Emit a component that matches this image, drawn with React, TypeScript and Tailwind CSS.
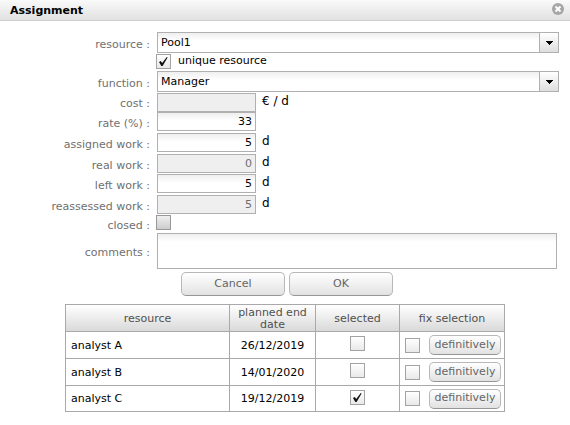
import { useId, type ReactNode } from "react";

const fieldBox =
  "box-border rounded-none border border-[#b0b0b0] text-[11px] outline-none";
const openField =
  "bg-white bg-linear-to-b from-[#efefef] to-white to-[8px] text-black";
const lockedField = "bg-[#efefef] text-[#6e6e6e]";
const raisedButton =
  "rounded-[5px] border border-[#b8b8b8] border-b-[#969696] bg-linear-to-b from-white to-[#e2e2e2] text-center text-[11px] text-[#656565]";

function Row({
  label,
  htmlFor,
  height,
  children,
}: {
  label?: string;
  htmlFor?: string;
  height: string;
  children: ReactNode;
}) {
  return (
    <div className={`flex ${height}`}>
      <div className="flex w-[157px] shrink-0 items-center justify-end pt-[3px] pr-[7px] leading-4 text-[#707070]">
        {label && <label htmlFor={htmlFor}>{label}&nbsp;:</label>}
      </div>
      {children}
    </div>
  );
}

function CheckBox({
  id,
  label,
  checked = false,
  dark = false,
}: {
  id?: string;
  label?: string;
  checked?: boolean;
  dark?: boolean;
}) {
  return (
    <span className="relative inline-block size-[15px] shrink-0 align-top">
      <input
        id={id}
        type="checkbox"
        aria-label={label}
        defaultChecked={checked}
        className={`peer block size-[15px] appearance-none border bg-linear-to-b ${
          dark
            ? "border-[#999999] from-[#f0f0f0] to-[#cccccc]"
            : "border-[#a3a3a3] from-white to-[#e9e9e9]"
        }`}
      />
      <svg
        viewBox="0 0 15 15"
        className="pointer-events-none absolute inset-0 hidden size-[15px] peer-checked:block"
      >
        <path d="M3 8 L4.8 7 L6.2 9 L10.8 3 L11.6 3.5 L6.6 12 L5.3 12 Z" fill="#111" />
      </svg>
    </span>
  );
}

function DropDown({ label, value }: { label: string; value: string }) {
  const id = useId();
  return (
    <Row label={label} htmlFor={id} height="h-[22px]">
      <div className="relative mr-[11px] h-[21px] flex-1">
        <select
          id={id}
          className={`block h-[21px] w-full appearance-none pt-0.5 pr-6 pl-[3px] ${fieldBox} ${openField}`}
        >
          <option>{value}</option>
        </select>
        <span className="pointer-events-none absolute inset-y-0 right-0 flex w-5 items-center justify-center border border-[#b0b0b0] bg-linear-to-b from-white to-[#dedede]">
          <svg width="7" height="4" viewBox="0 0 7 4" shapeRendering="crispEdges">
            <path d="M0 0H7V1H6V2H5V3H4V4H3V3H2V2H1V1H0Z" fill="#000" />
          </svg>
        </span>
      </div>
    </Row>
  );
}

function NumberField({
  label,
  value,
  unit,
  locked = false,
  height,
}: {
  label: string;
  value: string;
  unit?: string;
  locked?: boolean;
  height: string;
}) {
  const id = useId();
  return (
    <Row label={label} htmlFor={id} height={height}>
      <input
        id={id}
        type="text"
        defaultValue={value}
        readOnly={locked}
        className={`h-[19px] w-[99px] px-[3px] text-right ${fieldBox} ${
          locked ? lockedField : openField
        }`}
      />
      {unit && <span className="pl-1.5 text-xs">{unit}</span>}
    </Row>
  );
}

const analysts = [
  { name: "analyst A", end: "26/12/2019", selected: false },
  { name: "analyst B", end: "14/01/2020", selected: false },
  { name: "analyst C", end: "19/12/2019", selected: true },
];

const headCell = "border border-[#a9a9a9] px-0 pt-0.5 pb-0 font-normal leading-3";
const cell = "border border-[#a9a9a9] p-0";

export default function App() {
  return (
    <div className="min-h-screen bg-white font-['DejaVu_Sans',Verdana,sans-serif] text-[11px] text-black">
      <header className="flex h-[21px] items-center justify-between border-b border-[#cfcfcf] bg-linear-to-b from-[#fafafa] to-[#e1e1e1] pr-1.5 pl-2.5">
        <h1 className="pt-[3px] font-bold">Assignment</h1>
        <button type="button" aria-label="Close" className="mb-0.5">
          <svg width="12" height="12" viewBox="0 0 12 12" className="block">
            <circle cx="6" cy="6" r="6" fill="#a6a6a6" />
            <path d="M3.5 3.5 L8.5 8.5 M8.5 3.5 L3.5 8.5" stroke="#fff" strokeWidth="2" />
          </svg>
        </button>
      </header>

      <form className="pt-[11px]" onSubmit={(e) => e.preventDefault()}>
        <DropDown label="resource" value="Pool1" />
        <Row height="h-[17px]">
          <div className="-ml-px flex h-[15px] items-center gap-[7px]">
            <CheckBox id="unique" checked />
            <label htmlFor="unique">unique resource</label>
          </div>
        </Row>
        <DropDown label="function" value="Manager" />
        <NumberField label="cost" value="" unit="€ / d" locked height="h-[19px]" />
        <NumberField label="rate (%)" value="33" height="h-[21px]" />
        <NumberField label="assigned work" value="5" unit="d" height="h-[21px]" />
        <NumberField label="real work" value="0" unit="d" locked height="h-5" />
        <NumberField label="left work" value="5" unit="d" height="h-[21px]" />
        <NumberField label="reassessed work" value="5" unit="d" locked height="h-5" />
        <Row label="closed" htmlFor="closed" height="h-[18px]">
          <div className="-ml-px">
            <CheckBox id="closed" dark />
          </div>
        </Row>
        <Row label="comments" htmlFor="comments" height="h-9">
          <textarea
            id="comments"
            className={`mr-[13px] flex-1 resize-none px-[3px] ${fieldBox} ${openField}`}
          />
        </Row>

        <div className="flex justify-center gap-1 pt-[3px] pl-1">
          <button type="button" className={`h-6 w-[104px] ${raisedButton}`}>
            Cancel
          </button>
          <button type="submit" className={`h-6 w-[104px] ${raisedButton}`}>
            OK
          </button>
        </div>

        <table className="mx-auto mt-2 w-[440px] table-fixed border-collapse">
          <colgroup>
            <col className="w-[164px]" />
            <col className="w-[86px]" />
            <col className="w-[84px]" />
            <col />
          </colgroup>
          <thead>
            <tr className="h-[27px] bg-linear-to-b from-white to-[#d8d8d8] text-[#505050]">
              <th className={headCell}>resource</th>
              <th className={headCell}>
                planned end
                <br />
                date
              </th>
              <th className={headCell}>selected</th>
              <th className={headCell}>fix selection</th>
            </tr>
          </thead>
          <tbody>
            {analysts.map((a) => (
              <tr key={a.name} className="h-[27px] last:h-[26px]">
                <td className={`${cell} pt-0.5 pl-[5px]`}>{a.name}</td>
                <td className={`${cell} pt-0.5 text-center`}>{a.end}</td>
                <td className={`${cell} pb-[3px] text-center leading-none`}>
                  <CheckBox label={`${a.name} selected`} checked={a.selected} />
                </td>
                <td className={cell}>
                  <div className="flex items-center gap-[9px] pl-[5px]">
                    <CheckBox label={`Fix ${a.name}`} />
                    <button type="button" className={`h-5 w-[72px] ${raisedButton}`}>
                      definitively
                    </button>
                  </div>
                </td>
              </tr>
            ))}
          </tbody>
        </table>
      </form>
    </div>
  );
}
